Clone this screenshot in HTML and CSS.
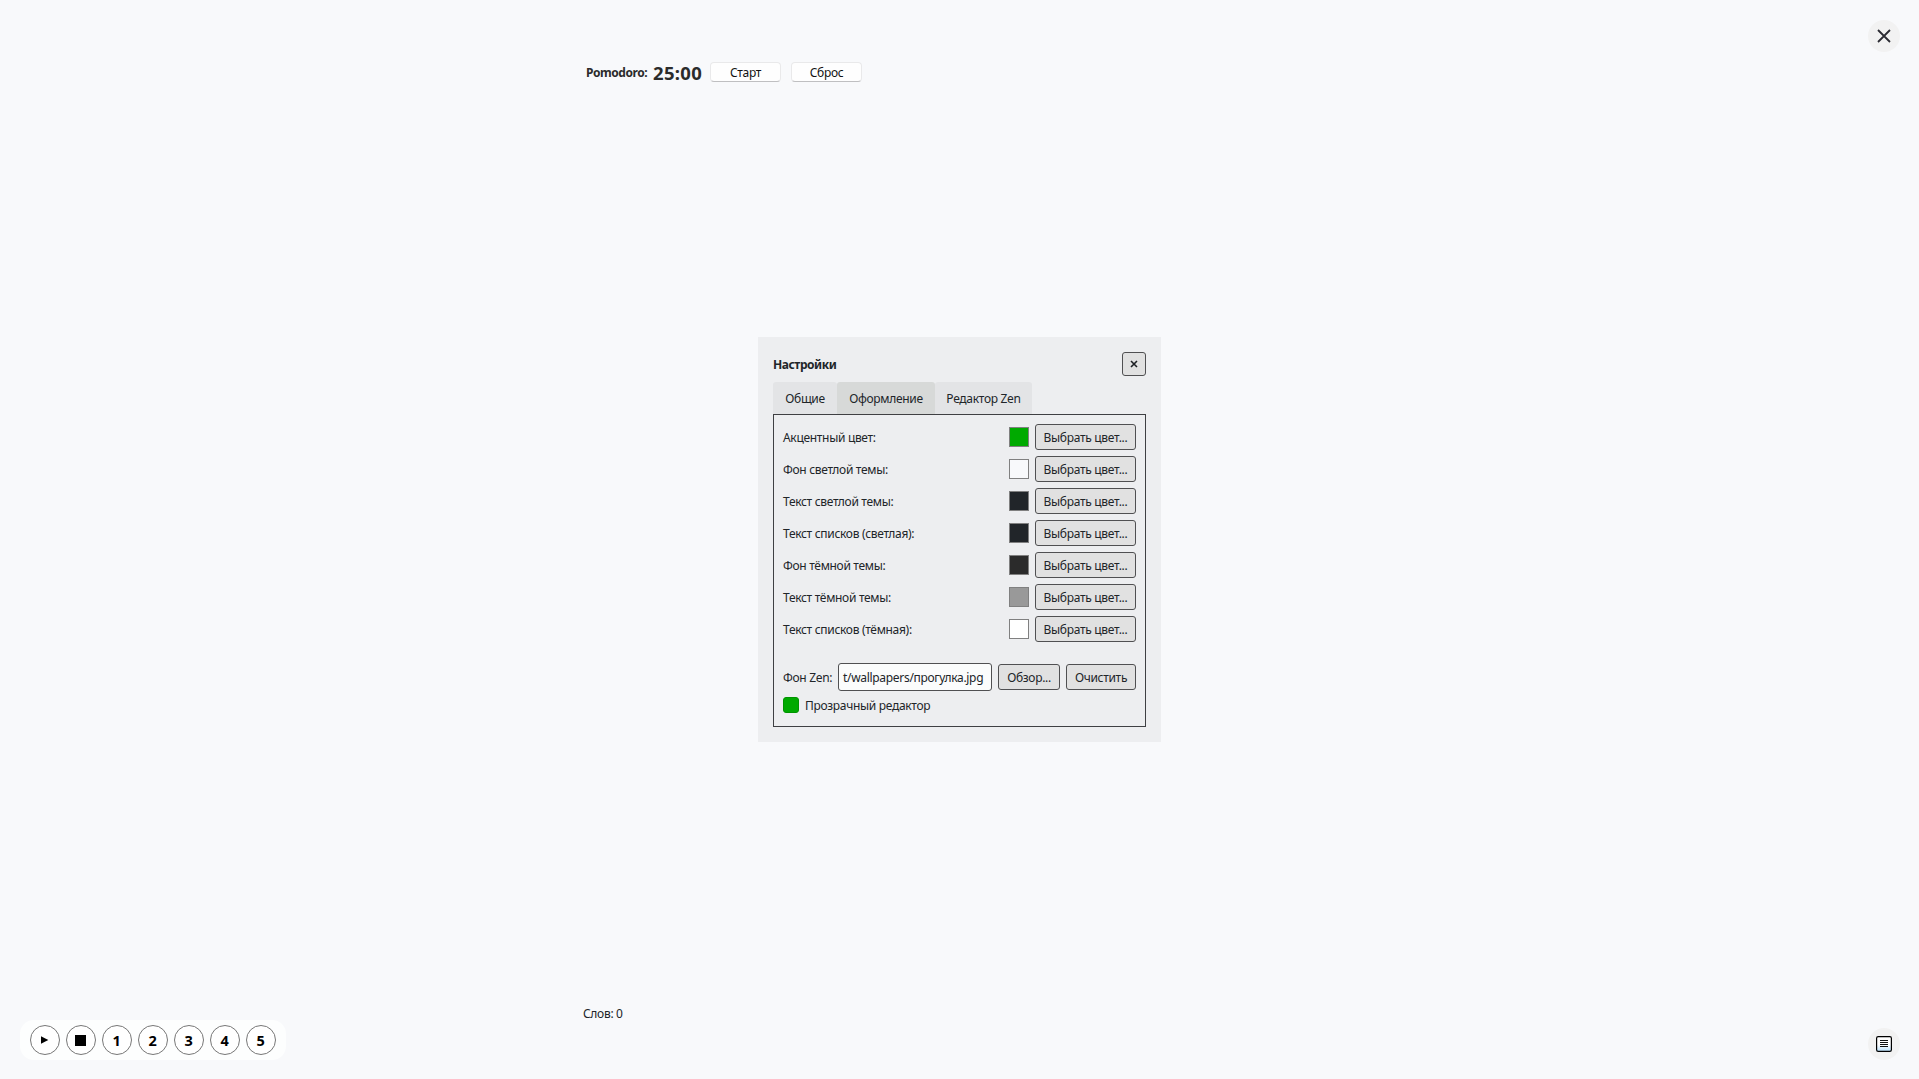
FILE: index.html
```html
<!DOCTYPE html>
<html lang="ru">
<head>
<meta charset="utf-8">
<title>Zen</title>
<link rel="stylesheet" href="styles.css">
</head>
<body>
<div class="app">
  <header class="topbar">
    <div class="pomodoro">
      <span class="pomodoro-label">Pomodoro:</span>
      <span class="pomodoro-time">25:00</span>
      <button class="flat">Старт</button>
      <button class="flat">Сброс</button>
    </div>
    <button class="round exit" aria-label="Закрыть">
      <svg width="16" height="16" viewBox="0 0 16 16"><path d="M2 2L14 14M14 2L2 14" fill="none" stroke="#2b2b33" stroke-width="1.8"/></svg>
    </button>
  </header>
  <footer class="bottombar">
    <div class="player">
      <button class="circle" aria-label="Play"><svg width="8" height="8" viewBox="0 0 8 8"><path d="M0 .3L7.3 4L0 7.7Z"/></svg></button>
      <button class="circle" aria-label="Stop"><svg class="stop" width="12" height="10" viewBox="0 0 12 10"><path d="M0 0H11V11H0Z"/></svg></button>
      <button class="circle num">1</button>
      <button class="circle num">2</button>
      <button class="circle num">3</button>
      <button class="circle num">4</button>
      <button class="circle num">5</button>
    </div>
    <span class="words">Слов: 0</span>
    <button class="round notes" aria-label="Заметки">
      <svg width="16" height="16" viewBox="0 0 16 16">
        <defs><linearGradient id="sheet" x1="0" y1="0" x2="0" y2="1"><stop offset=".55" stop-color="#fff"/><stop offset="1" stop-color="#b9e0fb"/></linearGradient></defs>
        <rect x=".6" y=".6" width="14.8" height="14.8" rx="1.6" fill="url(#sheet)" stroke="#000" stroke-width="1.2"/>
        <path d="M4 4.5H12M4 6.5H12M4 8.5H12M4 10.5H12" stroke="#111" stroke-width="1"/>
      </svg>
    </button>
  </footer>
</div>

<section class="dialog">
  <div class="dialog-head">
    <h1>Настройки</h1>
    <button class="btn close" aria-label="Закрыть"><svg width="8" height="8" viewBox="0 0 8 8"><path d="M1 1L7 7M7 1L1 7" fill="none" stroke="#1d2024" stroke-width="1.6"/></svg></button>
  </div>
  <nav class="tabs">
    <span class="tab t1">Общие</span>
    <span class="tab t2 active">Оформление</span>
    <span class="tab t3">Редактор Zen</span>
  </nav>
  <div class="panel">
    <div class="row"><span class="name">Акцентный цвет:</span><i class="swatch accent"></i><button class="btn pick">Выбрать цвет...</button></div>
    <div class="row"><span class="name">Фон светлой темы:</span><i class="swatch light-bg"></i><button class="btn pick">Выбрать цвет...</button></div>
    <div class="row"><span class="name">Текст светлой темы:</span><i class="swatch light-text"></i><button class="btn pick">Выбрать цвет...</button></div>
    <div class="row"><span class="name">Текст списков (светлая):</span><i class="swatch light-text"></i><button class="btn pick">Выбрать цвет...</button></div>
    <div class="row"><span class="name">Фон тёмной темы:</span><i class="swatch dark-bg"></i><button class="btn pick">Выбрать цвет...</button></div>
    <div class="row"><span class="name">Текст тёмной темы:</span><i class="swatch dark-text"></i><button class="btn pick">Выбрать цвет...</button></div>
    <div class="row"><span class="name">Текст списков (тёмная):</span><i class="swatch dark-list"></i><button class="btn pick">Выбрать цвет...</button></div>
    <div class="zen"><span class="zen-name">Фон Zen:</span><span class="field">t/wallpapers/прогулка.jpg</span><button class="btn browse">Обзор...</button><button class="btn clear">Очистить</button></div>
    <div class="check"><i class="box"></i><span class="check-text">Прозрачный редактор</span></div>
  </div>
</section>
</body>
</html>
```
FILE: styles.css
```css
* { box-sizing: border-box; }
body {
  margin: 0;
  background: #f8f9fb;
  color: #212529;
  font: 12px/16px "Noto Sans", "Open Sans", sans-serif;
  letter-spacing: -0.31px;
}
button {
  display: flex;
  align-items: center;
  justify-content: center;
  padding: 0;
  border: 0;
  font: inherit;
  letter-spacing: inherit;
  color: inherit;
  white-space: nowrap;
}
svg { display: block; }
.app {
  height: 1079px;
  display: flex;
  flex-direction: column;
  justify-content: space-between;
}
.topbar {
  display: flex;
  justify-content: space-between;
  padding: 20px 19px 0 586px;
}
.pomodoro { display: flex; align-items: center; margin-top: 42px; height: 20px; color: #2b2b2b; }
.pomodoro-label { width: 67px; padding-top: 2px; font-weight: 700; letter-spacing: -0.45px; }
.pomodoro-time { width: 57px; padding-top: 2px; font-size: 18.5px; font-weight: 700; letter-spacing: 0.3px; }
.flat {
  width: 71px;
  height: 20px;
  margin-right: 10px;
  padding-top: 2px;
  background: #fefefe;
  border: 1px solid #e9e9ea;
  border-bottom-color: #bfbfc1;
  border-radius: 4px;
  color: #111;
}
.round { width: 32px; height: 32px; border-radius: 50%; background: #f2f2f2; }
.bottombar {
  display: flex;
  align-items: flex-start;
  height: 73px;
  padding: 0 19px 0 20px;
}
.player {
  display: flex;
  gap: 6px;
  width: 266px;
  height: 40px;
  margin-top: 14px;
  padding: 5px 10px;
  border-radius: 14px;
  background: #fdfefe;
}
.circle {
  width: 30px;
  height: 30px;
  border: 1px solid #777;
  border-radius: 50%;
  background: #fff;
  color: #000;
  font-size: 14.5px;
  font-weight: 700;
}
.num { padding-right: 1px; }
.stop { overflow: visible; }
.words { margin: 0 auto 0 297px; }
.notes { margin-top: 22px; }

.dialog {
  position: absolute;
  left: 758px;
  top: 337px;
  width: 403px;
  height: 405px;
  padding: 15px;
  background: #edeef0;
}
.dialog-head { display: flex; justify-content: space-between; height: 30px; }
h1 { margin: 5px 0 0; font-size: 12px; line-height: 16px; font-weight: 700; letter-spacing: -0.45px; }
.btn {
  height: 26px;
  padding-top: 2px;
  border: 1px solid #505052;
  border-radius: 3px;
  background: #e1e1e1;
}
.close { width: 24px; height: 24px; padding-top: 0; }
.tabs { display: flex; height: 32px; }
.tab {
  display: flex;
  align-items: center;
  justify-content: center;
  padding-top: 2px;
  border-radius: 3px 3px 0 0;
  background: #e3e4e6;
}
.tab.active { background: #d7d9d8; }
.t1 { width: 64px; }
.t2 { width: 98px; }
.t3 { width: 97px; }
.panel { height: 313px; padding: 9px; border: 1px solid #3f4043; }
.row { display: flex; align-items: center; height: 26px; margin-bottom: 6px; }
.name { flex: 1; padding-top: 2px; }
.swatch { width: 20px; height: 20px; margin-right: 6px; border: 1px solid #808080; }
.pick { width: 101px; }
.accent { background: #00aa00; }
.light-bg { background: #f8f9fb; }
.light-text { background: #212529; }
.dark-bg { background: #2b2b2b; }
.dark-text { background: #999; }
.dark-list { background: #fff; }
.zen { display: flex; align-items: center; height: 28px; margin-top: 21px; }
.zen-name { width: 55px; padding-top: 2px; }
.field {
  width: 154px;
  height: 28px;
  padding: 6px 4px 4px;
  border: 1px solid #505052;
  border-radius: 3px;
  background: #fbfcfc;
  white-space: nowrap;
  overflow: hidden;
}
.browse { width: 62px; margin: 0 6px; }
.clear { width: 70px; }
.check { display: flex; align-items: center; gap: 6px; height: 16px; margin-top: 6px; }
.check-text { padding-top: 2px; }
.box { width: 16px; height: 16px; border: 1px solid #009400; border-radius: 3px; background: #00aa00; }
```
